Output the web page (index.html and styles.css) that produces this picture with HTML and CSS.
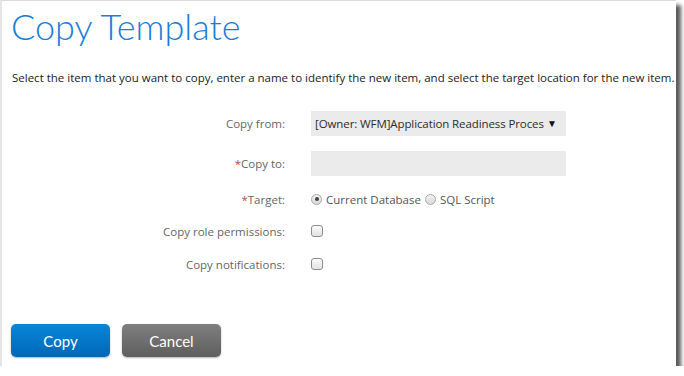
FILE: index.html
```html
<!DOCTYPE html>
<html lang="en">
<head>
    <meta charset="UTF-8">
    <meta name="viewport" content="width=device-width, initial-scale=1.0">
    <title>Copy Template</title>
    <link rel="stylesheet" href="styles.css">
</head>
<body>
    <div class="dialog">
        <h1 class="title">Copy Template</h1>
        <p class="intro">Select the item that you want to copy, enter a name to identify the new item, and select the target location for the new item.</p>

        <div class="form">
            <div class="row">
                <label class="label" for="copyFrom">Copy from:</label>
                <div class="select-wrap">
                    <select id="copyFrom" class="field select">
                        <option>[Owner: WFM]Application Readiness Process</option>
                    </select>
                </div>
            </div>

            <div class="row">
                <label class="label" for="copyTo"><span class="req">*</span>Copy to:</label>
                <input type="text" id="copyTo" class="field" />
            </div>

            <div class="row row-small row-target">
                <div class="label"><span class="req">*</span>Target:</div>
                <div class="choices">
                    <label class="choice"><input type="radio" name="target" checked /> Current Database</label>
                    <label class="choice"><input type="radio" name="target" /> SQL Script</label>
                </div>
            </div>

            <div class="row row-small row-check">
                <label class="label" for="rolePerms">Copy role permissions:</label>
                <input type="checkbox" id="rolePerms" />
            </div>

            <div class="row row-small row-check">
                <label class="label" for="notifs">Copy notifications:</label>
                <input type="checkbox" id="notifs" />
            </div>
        </div>

        <div class="actions">
            <button class="btn btn-copy">Copy</button>
            <button class="btn btn-cancel">Cancel</button>
        </div>
    </div>
</body>
</html>
```

FILE: styles.css
```css
/* Copy Template dialog */
body {
    margin: 0;
    padding: 0;
    background-color: #ffffff;
    font-family: "Open Sans", Arial, sans-serif;
}

.dialog {
    width: 674px;
    height: 365px;
    background-color: #ffffff;
    border-top: 1px solid #dcdcdc;
    border-left: 2px solid #e6e6e6;
    box-shadow: 5px 5px 4px rgba(0, 0, 0, 0.65);
    display: flex;
    flex-direction: column;
}

.title {
    margin: 0;
    padding: 2px 0 0 9px;
    height: 50px;
    font-family: Lato, sans-serif;
    font-weight: 300;
    font-size: 36px;
    line-height: 46px;
    color: #1a7dd6;
}

.intro {
    margin: 16px 0 0 10px;
    font-size: 11.5px;
    line-height: 18px;
    color: #222222;
    white-space: nowrap;
}

.form {
    margin-top: 24px;
    font-size: 11.5px;
}

.row {
    display: flex;
    align-items: center;
    gap: 26px;
    height: 25px;
}

.row + .row {
    margin-top: 15px;
}

.row-small {
    height: 22px;
}

.row + .row-target {
    margin-top: 12px;
}

.row + .row-check {
    margin-top: 10px;
}

.row-check + .row-check {
    margin-top: 11px;
}

.label {
    width: 283px;
    text-align: right;
    color: #666666;
}

.req {
    color: #b54a4a;
}

.field {
    box-sizing: border-box;
    width: 255px;
    height: 25px;
    border: none;
    outline: none;
    background-color: #ebebeb;
    font-family: "Open Sans", Arial, sans-serif;
    font-size: 11.5px;
    color: #333333;
    padding: 0 4px;
}

.select-wrap {
    position: relative;
}

.select {
    appearance: none;
    -webkit-appearance: none;
    padding-right: 22px;
    letter-spacing: -0.1px;
    color: #2b2b2b;
}

.select-wrap::after {
    content: "\25BC";
    position: absolute;
    right: 9px;
    top: 5px;
    font-size: 10px;
    color: #111111;
    pointer-events: none;
}

.choices {
    display: flex;
    align-items: center;
    gap: 4px;
    color: #555555;
}

.choice {
    display: flex;
    align-items: center;
    gap: 4px;
}

.choice input[type="radio"] {
    appearance: none;
    -webkit-appearance: none;
    margin: 0;
    width: 11px;
    height: 11px;
    border: 1px solid #a8a8a8;
    border-radius: 50%;
    background: linear-gradient(#f4f4f4, #d8d8d8);
    position: relative;
}

.choice input[type="radio"]:checked::after {
    content: "";
    position: absolute;
    left: 2.5px;
    top: 2.5px;
    width: 4px;
    height: 4px;
    border-radius: 50%;
    background-color: #444444;
}

.row-check input[type="checkbox"] {
    appearance: none;
    -webkit-appearance: none;
    margin: 0;
    width: 12px;
    height: 12px;
    border: 1px solid #8e8e8e;
    border-radius: 3px;
    background: linear-gradient(#fafafa, #e2e2e2);
}

.actions {
    display: flex;
    gap: 12px;
    margin-top: auto;
    padding: 0 0 9px 9px;
}

.btn {
    width: 99px;
    height: 33px;
    border: none;
    border-radius: 5px;
    color: #ffffff;
    font-family: Lato, sans-serif;
    font-size: 15px;
    cursor: pointer;
    box-shadow: 0 1px 2px rgba(0, 0, 0, 0.3);
}

.btn-copy {
    background: linear-gradient(#0a86d9, #0067b6);
}

.btn-cancel {
    background: linear-gradient(#7f7f7f, #5e5e5e);
}
```
